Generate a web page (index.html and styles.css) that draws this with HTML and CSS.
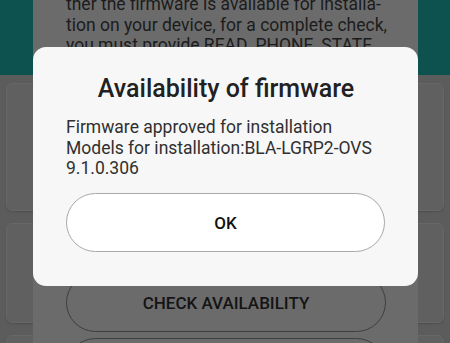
FILE: index.html
```html
<!DOCTYPE html>
<html>
<head>
<meta charset="utf-8">
<link rel="stylesheet" href="styles.css">
</head>
<body>
<div class="app">
  <div class="app-header"></div>
  <div class="app-cards">
    <div class="card card-a"></div>
    <div class="card card-b"></div>
    <div class="card card-c"></div>
  </div>
</div>
<div class="sheet">
  <div class="sheet-text">
    <p class="line">ther the firmware is available for installa-</p>
    <p class="line">tion on your device, for a complete check,</p>
    <p class="line">you must provide READ_PHONE_STATE</p>
  </div>
  <div class="sheet-buttons">
    <div class="outline-btn">CHECK AVAILABILITY</div>
    <div class="outline-btn"></div>
  </div>
</div>
<div class="dialog">
  <h1 class="dialog-title">Availability of firmware</h1>
  <div class="dialog-body">
    <p class="body-line">Firmware approved for installation</p>
    <p class="body-line">Models for installation:BLA-LGRP2-OVS</p>
    <p class="body-line">9.1.0.306</p>
  </div>
  <div class="dialog-actions">
    <button class="ok-btn">OK</button>
  </div>
</div>
</body>
</html>
```
FILE: styles.css
```css
* { box-sizing: border-box; }
html, body {
  margin: 0;
  padding: 0;
}
body {
  width: 450px;
  height: 343px;
  overflow: hidden;
  position: relative;
  background: #5c5c5c;
  font-family: Roboto, "Noto Sans", "Liberation Sans", sans-serif;
}
.app {
  display: flex;
  flex-direction: column;
  height: 343px;
  overflow: hidden;
}
.app-header {
  height: 75px;
  background: #0d524e;
  flex: none;
}
.app-cards {
  display: flex;
  flex-direction: column;
  gap: 12px;
  padding: 8px 6px 0;
}
.card {
  flex: none;
  border-radius: 6px;
  background: #606060;
  border: 1px solid #676767;
  box-shadow: 0 1px 2px rgba(0,0,0,0.15);
}
.card-a { height: 128px; }
.card-b { height: 100px; }
.card-c { height: 40px; }

.sheet {
  position: absolute;
  left: 33px;
  top: -40px;
  width: 385px;
  height: 383px;
  overflow: hidden;
  background: #6b6b6b;
  padding: 0 32px 0 33px;
  display: flex;
  flex-direction: column;
}
.sheet-text {
  padding-top: 34px;
}
.line {
  margin: 0;
  font-size: 17.5px;
  line-height: 20.5px;
  height: 20.5px;
  color: #1c1c1c;
  white-space: nowrap;
}
.sheet-buttons {
  margin-top: 217.5px;
  display: flex;
  flex-direction: column;
  gap: 6px;
}
.outline-btn {
  flex: none;
  height: 59px;
  border: 1px solid #3e3e3e;
  border-radius: 30px;
  display: flex;
  align-items: center;
  justify-content: center;
  font-size: 17px;
  font-weight: 500;
  color: #141414;
}

.dialog {
  position: absolute;
  left: 33px;
  top: 47px;
  width: 385px;
  height: 239px;
  background: #f7f7f7;
  border-radius: 13px;
  padding: 26.5px 32px 0 33px;
}
.dialog-title {
  margin: 0;
  text-align: center;
  font-size: 25px;
  font-weight: 500;
  line-height: 30px;
  color: #212121;
}
.dialog-body {
  margin-top: 13.5px;
}
.body-line {
  margin: 0;
  font-size: 17.5px;
  line-height: 20.5px;
  color: #303030;
  white-space: nowrap;
}
.dialog-actions {
  margin-top: 14.5px;
}
.ok-btn {
  display: block;
  width: 319px;
  height: 59px;
  border: 1px solid #a8a8a8;
  border-radius: 30px;
  background: #ffffff;
  font-family: Roboto, "Noto Sans", "Liberation Sans", sans-serif;
  font-size: 17px;
  font-weight: 500;
  color: #111111;
  padding: 0;
}
```
